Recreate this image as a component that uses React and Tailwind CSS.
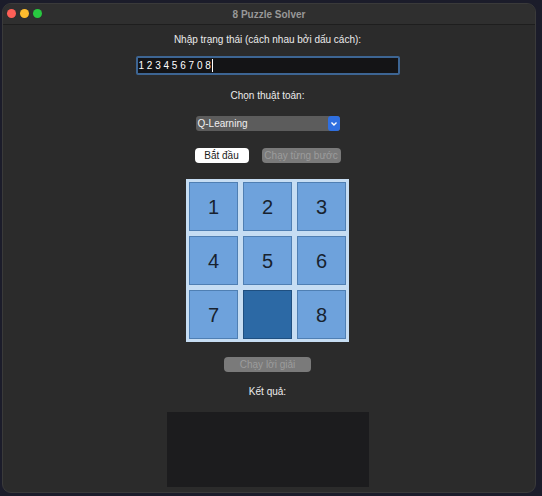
// App.jsx — 8 Puzzle Solver window
const tiles = [1, 2, 3, 4, 5, 6, 7, 0, 8];

function Tile({ value }) {
  if (value === 0) {
    return <div className="h-[49px] w-[49px] border border-[#1f4f80] bg-[#2c69a5]" />;
  }
  return (
    <div className="h-[49px] w-[49px] border border-[#4f7fb3] bg-[#6ea2dc] flex items-center justify-center text-[20px] text-[#18222e]">
      {value}
    </div>
  );
}

export default function App() {
  return (
    <div
      className="w-[542px] h-[496px] bg-[#1b1c2a] pl-[2px] pt-[3px] pr-[6px] pb-[3px]"
      style={{ fontFamily: '"Liberation Sans", Arial, sans-serif' }}
    >
      <div className="h-full rounded-[9px] bg-[#2b2b2b] border border-[#3a3a3a] overflow-hidden flex flex-col">
        {/* title bar */}
        <div className="relative h-[21px] bg-[#2f2f2f] border-b border-[#1e1e1e] flex items-center justify-center">
          <div className="absolute left-[4px] top-[5px] flex gap-[4px]">
            <span className="h-[9px] w-[9px] rounded-full bg-[#fe5f57]" />
            <span className="h-[9px] w-[9px] rounded-full bg-[#febc2e]" />
            <span className="h-[9px] w-[9px] rounded-full bg-[#28c840]" />
          </div>
          <span className="text-[10px] font-bold text-[#989898]">8 Puzzle Solver</span>
        </div>

        <div className="flex flex-col items-center pr-[3px] text-[10px] text-[#ececec]">
          <p className="mt-[8px] leading-[14px]">Nhập trạng thái (cách nhau bởi dấu cách):</p>

          <div className="mt-[9px] h-[19px] w-[264px] border-2 border-[#3d6593] rounded-[2px] bg-[#141416] flex items-center px-[1px] text-[10px] text-white">
            1 2 3 4 5 6 7 0 8<span className="ml-[1px] h-[13px] w-[1px] bg-white" />
          </div>

          <p className="mt-[14px] leading-[14px]">Chọn thuật toán:</p>

          <div className="mt-[13px] h-[15px] w-[144px] rounded-[3px] bg-[#5c5c5c] flex items-center justify-between pl-[2px] text-[10px] text-[#f0f0f0]">
            <span>Q-Learning</span>
            <span className="h-[15px] w-[12px] rounded-[3px] bg-[#2f6fe0] flex items-center justify-center">
              <svg width="8" height="6" viewBox="0 0 8 6">
                <path d="M1.5 1.5 L4 4 L6.5 1.5" stroke="white" strokeWidth="1.4" fill="none" />
              </svg>
            </span>
          </div>

          <div className="mt-[17px] flex gap-[13px]">
            <button className="h-[15px] w-[54px] rounded-[4px] bg-white text-[10px] leading-[15px] text-[#1a1a1a]">
              Bắt đầu
            </button>
            <button className="h-[15px] w-[79px] rounded-[4px] bg-[#7a7a7a] text-[10px] leading-[15px] text-[#9c9c9c] whitespace-nowrap overflow-hidden">
              Chạy từng bước
            </button>
          </div>

          <div className="mt-[16px] bg-[#c6ddf3] p-[3px] grid grid-cols-3 gap-[5px]">
            {tiles.map((t, i) => (
              <Tile key={i} value={t} />
            ))}
          </div>

          <button className="mt-[15px] h-[15px] w-[87px] rounded-[4px] bg-[#7a7a7a] text-[10px] leading-[15px] text-[#9c9c9c] whitespace-nowrap overflow-hidden">
            Chạy lời giải
          </button>

          <p className="mt-[13px] leading-[14px]">Kết quả:</p>

          <div className="mt-[13px] h-[75px] w-[202px] bg-[#1c1c1e]" />
        </div>
      </div>
    </div>
  );
}
